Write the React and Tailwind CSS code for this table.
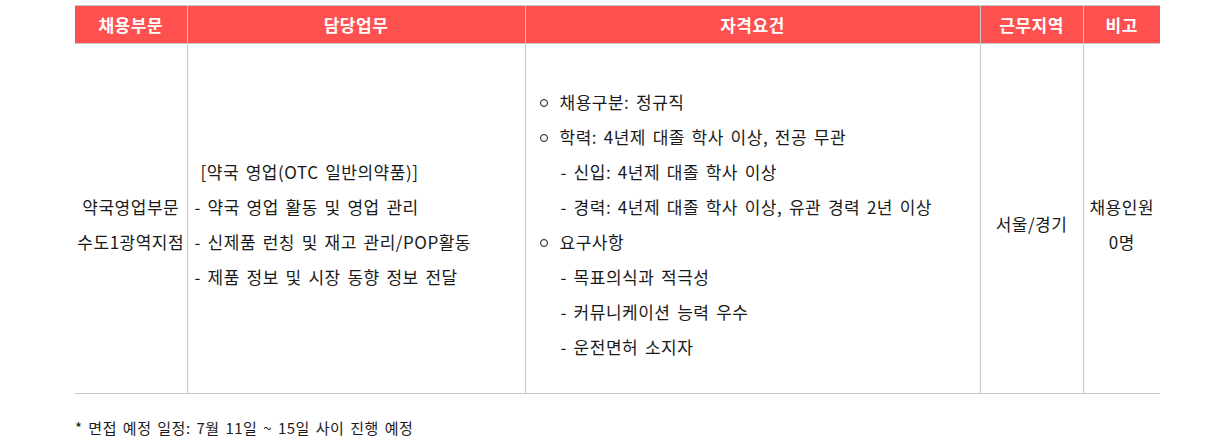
import React from "react";

const border = "border-[#c8c8c8]";

const Bullet = ({ children }) => (
  <div className="flex items-center">
    <span className="ml-[14px] mr-[12px] mt-[3px] inline-block h-[8px] w-[8px] shrink-0 rounded-full border-[1.5px] border-[#111]" />
    <span>{children}</span>
  </div>
);

const Sub = ({ children }) => (
  <div className="pl-[35px]">- {children}</div>
);

const App = () => {
  return (
    <div
      className="w-[1209px] bg-white pt-[5px] pl-[75px] text-[17px] leading-[35px] tracking-[0.5px] [word-spacing:2.4px] text-[#1a1a1a]"
      style={{ fontFamily: '"Noto Sans CJK KR", "Noto Sans", sans-serif' }}
    >
      <table className={`w-[1085px] table-fixed border-collapse border-t border-b ${border}`}>
        <colgroup>
          <col className="w-[112px]" />
          <col className="w-[338px]" />
          <col className="w-[455px]" />
          <col className="w-[103px]" />
          <col className="w-[77px]" />
        </colgroup>
        <thead>
          <tr className={`h-[38px] bg-[#ff5050] border-b ${border} text-white`}>
            <th className={`border-r ${border} font-bold`}>채용부문</th>
            <th className={`border-r ${border} font-bold`}>담당업무</th>
            <th className={`border-r ${border} font-bold`}>자격요건</th>
            <th className={`border-r ${border} font-bold`}>근무지역</th>
            <th className="font-bold">비고</th>
          </tr>
        </thead>
        <tbody>
          <tr className="h-[350px]">
            <td className={`border-r ${border} text-center align-middle pt-[10px]`}>
              <div>약국영업부문</div>
              <div>수도1광역지점</div>
            </td>
            <td className={`border-r ${border} align-middle pl-[7px] pt-[10px]`}>
              <div className="pl-[6px]">[약국 영업(OTC 일반의약품)]</div>
              <div>- 약국 영업 활동 및 영업 관리</div>
              <div>- 신제품 런칭 및 재고 관리/POP활동</div>
              <div>- 제품 정보 및 시장 동향 정보 전달</div>
            </td>
            <td className={`border-r ${border} align-middle pt-[10px]`}>
              <Bullet>채용구분: 정규직</Bullet>
              <Bullet>학력: 4년제 대졸 학사 이상, 전공 무관</Bullet>
              <Sub>신입: 4년제 대졸 학사 이상</Sub>
              <Sub>경력: 4년제 대졸 학사 이상, 유관 경력 2년 이상</Sub>
              <Bullet>요구사항</Bullet>
              <Sub>목표의식과 적극성</Sub>
              <Sub>커뮤니케이션 능력 우수</Sub>
              <Sub>운전면허 소지자</Sub>
            </td>
            <td className={`border-r ${border} text-center align-middle pt-[10px]`}>
              서울/경기
            </td>
            <td className="text-center align-middle pt-[10px]">
              <div>채용인원</div>
              <div>0명</div>
            </td>
          </tr>
        </tbody>
      </table>
      <p className="mt-[16px] pb-[3px] text-[15px] [word-spacing:2px]">
        * 면접 예정 일정: 7월 11일 ~ 15일 사이 진행 예정
      </p>
    </div>
  );
};

export default App;
